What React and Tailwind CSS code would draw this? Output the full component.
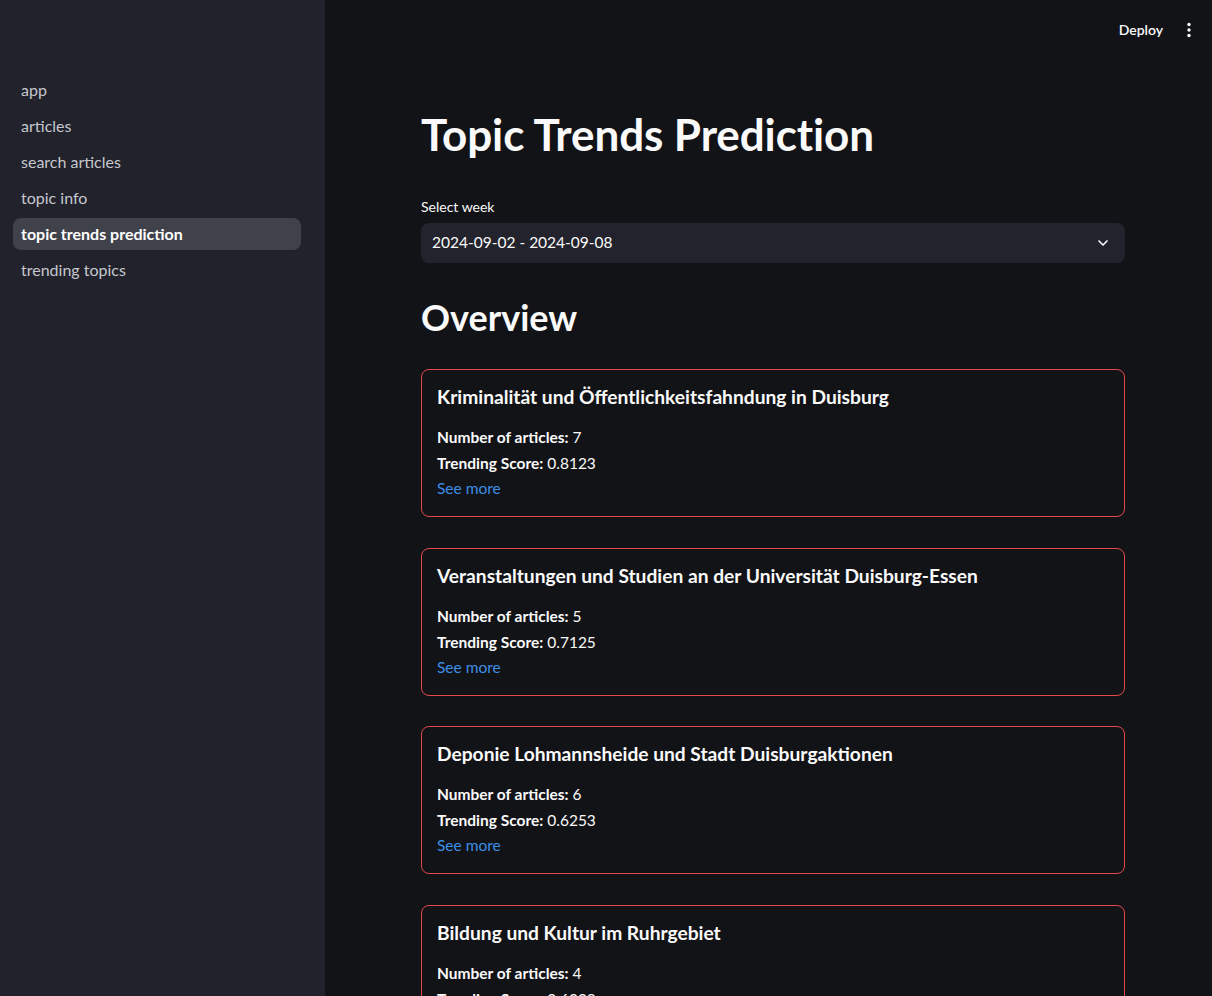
import { ChevronDown } from "lucide-react";

const pages = ["app", "articles", "search articles", "topic info", "topic trends prediction", "trending topics"];

const topics = [
  { title: "Kriminalität und Öffentlichkeitsfahndung in Duisburg", count: 7, score: "0.8123" },
  { title: "Veranstaltungen und Studien an der Universität Duisburg-Essen", count: 5, score: "0.7125" },
  { title: "Deponie Lohmannsheide und Stadt Duisburgaktionen", count: 6, score: "0.6253" },
  { title: "Bildung und Kultur im Ruhrgebiet", count: 4, score: "0.6002" },
];

function MoreVert() {
  return (
    <svg width="16" height="16" viewBox="0 0 16 16" fill="#fafafa">
      <circle cx="8" cy="2.5" r="1.7" />
      <circle cx="8" cy="8" r="1.7" />
      <circle cx="8" cy="13.5" r="1.7" />
    </svg>
  );
}

export default function App() {
  return (
    <div className="flex h-[996px] w-full overflow-hidden bg-[#121317] font-['Lato',sans-serif] text-[#fafafa]">
      {/* Sidebar */}
      <aside className="w-[325px] shrink-0 bg-[#21222b] pl-[13px] pr-[24px] pt-[74px]">
        <nav className="flex flex-col gap-1">
          {pages.map((p) => (
            <div
              key={p}
              className={`flex h-8 items-center rounded-lg px-2 text-base ${
                p === "topic trends prediction" ? "bg-[#40424b] font-bold text-white" : "text-[#c6c8ce]"
              }`}
            >
              {p}
            </div>
          ))}
        </nav>
      </aside>

      {/* Main */}
      <main className="flex min-w-0 flex-1 flex-col">
        <header className="flex h-[60px] shrink-0 items-center justify-end gap-[18px] pr-[15px]">
          <span className="text-sm font-semibold text-[#fafafa]">Deploy</span>
          <MoreVert />
        </header>

        <div className="flex w-[800px] shrink-0 flex-col pl-[96px] pt-[48px]">
          <h1 className="text-[44px] font-bold leading-[52px] tracking-[-0.1px]">Topic Trends Prediction</h1>

          <label className="mt-[37px] text-sm leading-5">Select week</label>
          <div className="mt-[6px] flex h-10 items-center justify-between rounded-lg bg-[#22232c] pl-[11px] pr-[14px]">
            <span className="text-[15.5px]">2024-09-02 - 2024-09-08</span>
            <ChevronDown size={16} strokeWidth={2.5} />
          </div>

          <h2 className="mt-[32px] text-[36px] font-bold leading-[44px]">Overview</h2>

          <div className="mt-[30px] flex flex-col gap-[30.7px]">
            {topics.map((t) => (
              <div key={t.title} className="h-[148px] shrink-0 rounded-lg border border-[#e2474b] px-[15px] pt-[13px]">
                <div className="text-[19.2px] font-bold leading-7">{t.title}</div>
                <div className="mt-[13px] text-[15.5px] leading-[26px]">
                  <span className="font-bold">Number of articles:</span> {t.count}
                </div>
                <div className="text-[15.5px] leading-[26px]">
                  <span className="font-bold">Trending Score:</span> {t.score}
                </div>
                <div className="text-[15.5px] leading-[25px] text-[#3d8ee6]">See more</div>
              </div>
            ))}
          </div>
        </div>
      </main>
    </div>
  );
}
